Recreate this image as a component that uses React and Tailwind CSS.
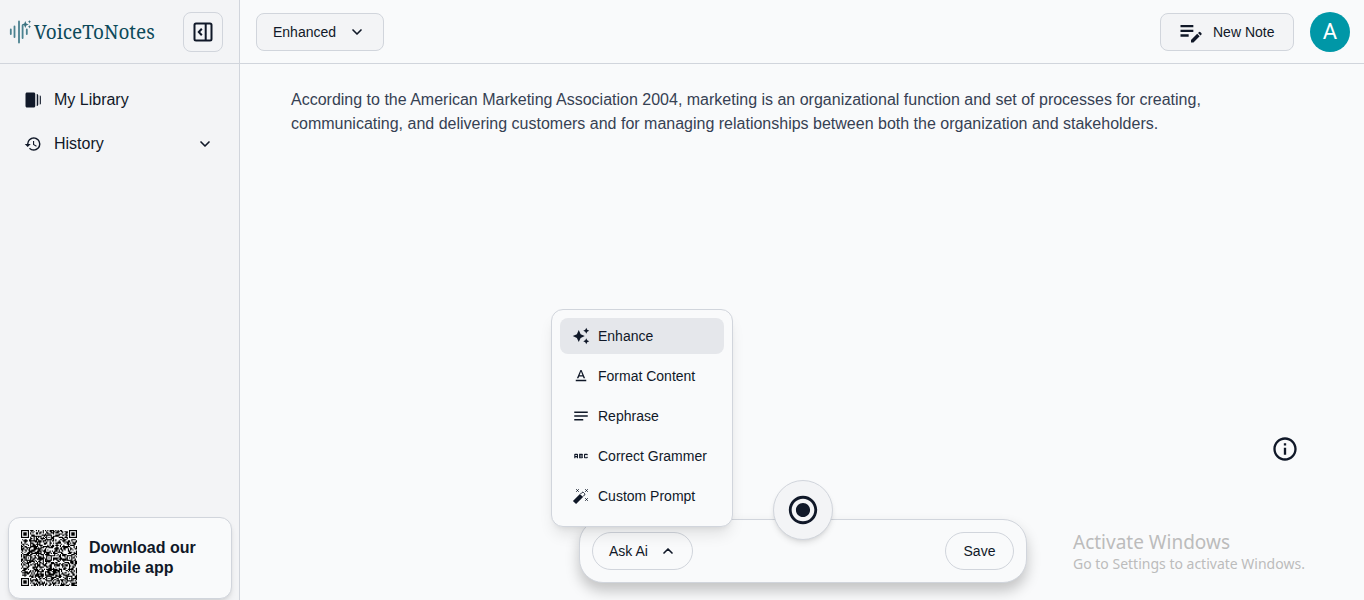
import React, { useState } from 'react';
import {
	MdWebStories, MdHistory, MdEditNote, MdAutoAwesome, MdTextFormat, MdNotes, MdAbc,
	MdRadioButtonChecked, MdInfoOutline,
} from 'react-icons/md';
import { LuChevronDown, LuChevronUp } from 'react-icons/lu';

const QR_SIZE = 49;
const finders = [[0, 0], [QR_SIZE - 7, 0], [0, QR_SIZE - 7]];
const alignments = [[24, 6], [6, 24], [24, 24], [42, 24], [24, 42], [42, 42]];

// Finder and alignment squares are kept clear, the rest is filled with data modules
function qrPath() {
	const inFinder = (x, y) => (x < 8 && y < 8) || (x > QR_SIZE - 9 && y < 8) || (x < 8 && y > QR_SIZE - 9);
	const inAlignment = (x, y) => alignments.some(([cx, cy]) => Math.abs(x - cx) < 3 && Math.abs(y - cy) < 3);
	let seed = 4211;
	let d = '';
	for (let y = 0; y < QR_SIZE; y++) {
		for (let x = 0; x < QR_SIZE; x++) {
			seed = (seed * 1103515245 + 12345) % 2147483648;
			if (!inFinder(x, y) && !inAlignment(x, y) && seed / 2147483648 < 0.56) d += `M${x} ${y}h1v1h-1z`;
		}
	}
	return d;
}

function QrCode() {
	return (
		<svg className="w-14 h-14 shrink-0 text-black" viewBox={`0 0 ${QR_SIZE} ${QR_SIZE}`} role="img" aria-label="QR code">
			<path fill="currentColor" d={qrPath()} />
			{finders.map(([x, y]) => (
				<g key={`${x}-${y}`} fill="none" stroke="currentColor">
					<rect x={x + 0.5} y={y + 0.5} width="6" height="6" />
					<rect x={x + 2} y={y + 2} width="3" height="3" fill="currentColor" stroke="none" />
				</g>
			))}
			{alignments.map(([x, y]) => (
				<g key={`${x}-${y}`} fill="none" stroke="currentColor">
					<rect x={x - 1.5} y={y - 1.5} width="4" height="4" />
					<rect x={x} y={y} width="1" height="1" fill="currentColor" stroke="none" />
				</g>
			))}
		</svg>
	);
}

function Logo() {
	return (
		<a href="#" className="flex items-center gap-0.5 text-[#0d4a5a]">
			<svg className="w-6 h-6 shrink-0" viewBox="0 0 24 24" fill="none" stroke="#4b8290" strokeWidth="1.8" strokeLinecap="round">
				<path d="M2.8 9.5v4.5M6.500 6.5v10.500M11 1.5v21M14.600 5.500v12.500M18.800 9.500v4.500" />
				<path fill="#3b7280" stroke="none" d="M17.3 1l1 2.500 2.500 1-2.500 1-1 2.500-1-2.500-2.500-1 2.500-1zM21.500 0l.5 1.200 1.200.5-1.200.5-.5 1.300-.5-1.300-1.200-.5 1.200-.5zM21.500 5l.5 1.200 1.200.5-1.200.5-.5 1.300-.5-1.300-1.200-.5 1.200-.5z" />
			</svg>
			<span className="font-['Noto_Serif','Liberation_Serif',serif] text-[19px] leading-6">VoiceToNotes</span>
		</a>
	);
}

function PanelIcon() {
	return (
		<svg className="w-6 h-6" viewBox="0 0 24 24" fill="none" stroke="currentColor" strokeWidth="2">
			<rect x="3.5" y="3.5" width="17" height="17" rx="1.5" />
			<path d="M14.7 3.5v17M10.800 8.800L7.800 12l3 3.200" />
		</svg>
	);
}

function WandIcon({ className }) {
	return (
		<svg className={className} viewBox="0 0 18 18" fill="none" stroke="currentColor">
			<path strokeWidth="4.5" d="M2.500 15.500l7-7" />
			<path strokeWidth="1" d="M8.500 7l1.500-1.500q.8-.6 1.500 0l1 1q.6.800 0 1.500L11 9.500" />
			<path strokeWidth="1" d="M4.300 2.300l2.400 2.400M6.700 2.300L4.300 4.700M13.300 2.300l2.400 2.400M15.700 2.300l-2.400 2.400M13.300 11.300l2.400 2.400M15.700 11.300l-2.400 2.400" />
		</svg>
	);
}

const menuItems = [
	{ label: 'Enhance', icon: MdAutoAwesome },
	{ label: 'Format Content', icon: MdTextFormat },
	{ label: 'Rephrase', icon: MdNotes },
	{ label: 'Correct Grammer', icon: MdAbc },
	{ label: 'Custom Prompt', icon: WandIcon },
];

function Sidebar() {
	return (
		<aside className="w-60 shrink-0 flex flex-col bg-gray-100 border-r border-gray-300">
			<div className="h-16 shrink-0 flex items-center justify-between pl-2 pr-4 border-b border-gray-300">
				<Logo />
				<button aria-label="Collapse sidebar" className="w-10 h-10 flex items-center justify-center rounded-lg border border-gray-300">
					<PanelIcon />
				</button>
			</div>
			<nav className="flex-1 flex flex-col gap-1 px-2 py-4">
				<a href="#" className="h-10 flex items-center gap-3 px-4">
					<MdWebStories className="w-[18px] h-[18px]" />
					My Library
				</a>
				<button className="h-10 flex items-center gap-3 pl-4 pr-[18px]">
					<MdHistory className="w-[18px] h-[18px]" />
					<span className="flex-1 text-left">History</span>
					<LuChevronDown className="w-4 h-4 stroke-[2.5]" />
				</button>
			</nav>
			<a href="#" className="ml-2 mr-[7px] mb-px flex items-center gap-3 p-3 rounded-xl border border-gray-300 bg-gray-50 shadow-md">
				<QrCode />
				<span className="font-bold leading-5">Download our<br />mobile app</span>
			</a>
		</aside>
	);
}

function AskMenu() {
	const [active, setActive] = useState('Enhance');
	return (
		<div role="menu" className="absolute z-20 bottom-[55px] -left-[29px] w-[182px] flex flex-col gap-1 px-2 pt-2 pb-3 rounded-xl border border-gray-300 bg-gray-50 shadow-lg">
			{menuItems.map(({ label, icon: Icon }) => (
				<button
					key={label}
					role="menuitem"
					onMouseEnter={() => setActive(label)}
					className={`h-9 flex items-center gap-2 px-3 rounded-lg text-sm whitespace-nowrap ${active === label ? 'bg-gray-200' : ''}`}
				>
					<Icon className="w-[18px] h-[18px] shrink-0" />
					{label}
				</button>
			))}
		</div>
	);
}

function Toolbar() {
	const [open, setOpen] = useState(true);
	return (
		<div className="relative w-full max-w-md h-16 flex items-center justify-between px-3 rounded-3xl border border-gray-300 bg-gray-50 shadow-[0_8px_14px_rgba(0,0,0,0.22)]">
			{open && <AskMenu />}
			<button onClick={() => setOpen(!open)} className="h-[38px] flex items-center gap-3 px-4 rounded-full border border-gray-300 text-sm">
				Ask Ai
				<LuChevronUp className="w-4 h-4 stroke-[2.5]" />
			</button>
			<button aria-label="Record" className="absolute -top-10 left-1/2 -translate-x-1/2 w-15 h-15 flex items-center justify-center rounded-full border border-gray-300 bg-gray-100 shadow-md">
				<MdRadioButtonChecked className="w-[34px] h-[34px]" />
			</button>
			<button className="h-[38px] w-[69px] rounded-full border border-gray-300 text-sm">Save</button>
		</div>
	);
}

function App() {
	return (
		<div className="min-h-screen flex bg-gray-50 text-gray-900 font-['Liberation_Sans',Arial,sans-serif]">
			<Sidebar />
			<div className="relative flex-1 flex flex-col">
				<header className="h-16 shrink-0 flex items-center justify-between pl-4 pr-[14px] border-b border-gray-300">
					<button className="h-[38px] w-32 flex items-center justify-between pl-4 pr-[18px] rounded-lg border border-gray-300 bg-gray-100 text-sm">
						Enhanced
						<LuChevronDown className="w-4 h-4 stroke-[2.5]" />
					</button>
					<div className="flex items-center gap-4">
						<button className="h-[38px] w-[134px] flex items-center gap-2 px-4 rounded-lg border border-gray-300 bg-gray-100 text-sm">
							<MdEditNote className="w-7 h-7" />
							New Note
						</button>
						<button aria-label="Account" className="w-10 h-10 rounded-full bg-[#0097a7] text-white text-[22px] font-['Roboto',sans-serif]">A</button>
					</div>
				</header>
				<main className="flex-1 flex flex-col pl-0.5">
					<p className="w-full max-w-5xl mx-auto mt-6 pr-12 text-gray-700">
						According to the American Marketing Association 2004, marketing is an organizational function and set of processes for creating, communicating, and delivering customers and for managing relationships between both the organization and stakeholders.
					</p>
				</main>
				<footer className="flex justify-center pl-0.5 pb-[17px]">
					<Toolbar />
				</footer>
				<button aria-label="Info" className="absolute right-[65px] bottom-[137px]">
					<MdInfoOutline className="w-7 h-7" />
				</button>
				<div className="absolute right-[54px] bottom-[26px] w-[237px] text-[#bcbcbc] font-['Noto_Sans',sans-serif] pointer-events-none">
					<p className="text-[19px] leading-6">Activate Windows</p>
					<p className="text-sm leading-5">Go to Settings to activate Windows.</p>
				</div>
			</div>
		</div>
	);
}

export default App;
